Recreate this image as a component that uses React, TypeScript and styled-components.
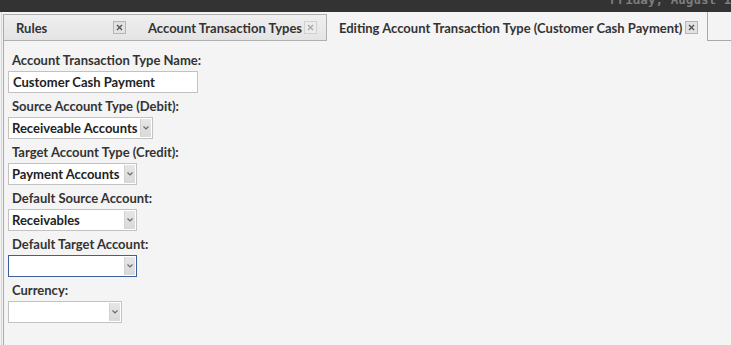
import React from 'react'
import styled, { createGlobalStyle } from 'styled-components'

const GlobalStyle = createGlobalStyle`
  html, body {
    margin: 0;
    padding: 0;
    background: #f4f4f4;
    font-family: Lato, "Liberation Sans", sans-serif;
  }
`

const Page = styled.div`
  width: 731px;
  height: 345px;
  display: flex;
  flex-direction: column;
  overflow: hidden;
  background: #f4f4f4;
`

const TopBar = styled.div`
  height: 12px;
  flex: none;
  background: #333333;
  display: flex;
  padding-left: 610px;
  overflow: hidden;
`

const Clock = styled.div`
  font-family: "DejaVu Sans Mono", monospace;
  font-size: 12.6px;
  font-weight: bold;
  color: #7d7d7d;
  line-height: 12px;
  margin-top: -6px;
  white-space: nowrap;
`

const Body = styled.div`
  flex: 1;
  display: flex;
  border-left: 1px solid #d4d4d4;
  margin-left: 1px;
  padding-left: 1px;
`

const Pane = styled.div`
  flex: 1;
  display: flex;
  flex-direction: column;
  border-left: 1px solid #a9a9a9;
  margin-top: 2px;
`

const TabBar = styled.div`
  height: 29px;
  flex: none;
  display: flex;
  margin-top: -2px;
`

const InactiveTabs = styled.div`
  display: flex;
  align-self: flex-end;
  height: 27px;
  box-sizing: border-box;
  background: linear-gradient(#efefef, #e4e4e4);
  border-top: 1px solid #b0b0b0;
  border-right: 1px solid #b0b0b0;
  border-bottom: 1px solid #b0b0b0;
`

const Tab = styled.div<{ active?: boolean; width: number; padRight: number }>`
  width: ${p => p.width}px;
  box-sizing: border-box;
  display: flex;
  align-items: center;
  justify-content: space-between;
  padding: 0 ${p => p.padRight}px 0 12px;
  font-size: 13px;
  font-weight: bold;
  color: #333333;
  white-space: nowrap;
  ${p =>
    p.active &&
    `
    height: 29px;
    align-self: stretch;
    padding-top: 2px;
    border-right: 1px solid #a9a9a9;
    background: #f4f4f4;
  `}
`

const CloseBox = styled.div<{ dim?: boolean }>`
  width: 13px;
  height: 13px;
  box-sizing: border-box;
  border: 1px solid ${p => (p.dim ? '#d0d0d0' : '#b5b5b5')};
  background: ${p => (p.dim ? '#ececec' : '#e2e2e2')};
  display: flex;
  align-items: center;
  justify-content: center;
  svg {
    display: block;
  }
`

const TabFiller = styled.div`
  flex: 1;
  border-bottom: 1px solid #a9a9a9;
`

const Form = styled.div`
  display: flex;
  flex-direction: column;
  align-items: flex-start;
  padding: 6px 0 0 4px;
`

const Label = styled.div`
  font-size: 13px;
  font-weight: bold;
  color: #333333;
  height: 18px;
  line-height: 18px;
  padding-left: 4px;
  margin: 4px 0 2px;
`

const TextBox = styled.div<{ width: number }>`
  width: ${p => p.width}px;
  height: 22px;
  box-sizing: border-box;
  background: #ffffff;
  border: 1px solid #c2c2c2;
  font-size: 13px;
  font-weight: bold;
  color: #222222;
  line-height: 20px;
  padding-left: 4px;
`

const Select = styled.div<{ width: number; focused?: boolean }>`
  width: ${p => p.width}px;
  height: 22px;
  box-sizing: border-box;
  display: flex;
  background: #ffffff;
  border: 1px solid ${p => (p.focused ? '#3d5f9b' : '#c2c2c2')};
`

const SelectValue = styled.div`
  flex: 1;
  font-size: 13px;
  font-weight: bold;
  color: #222222;
  line-height: 20px;
  padding-left: 3px;
  white-space: nowrap;
  overflow: hidden;
`

const Arrow = styled.div`
  width: 10px;
  margin: 1px 1px 1px 0;
  background: linear-gradient(#e6e6e6, #d9d9d9);
  border-left: 1px solid #d2d2d2;
  display: flex;
  align-items: center;
  justify-content: center;
`

const Cross = ({ color }: { color: string }) => (
  <svg width="7" height="7" viewBox="0 0 7 7">
    <path d="M1 1L6 6M6 1L1 6" stroke={color} strokeWidth="1.4" />
  </svg>
)

const Chevron = () => (
  <svg width="6" height="4" viewBox="0 0 6 4">
    <path d="M0.5 0.5L3 3L5.5 0.5" stroke="#6b6b6b" strokeWidth="1.2" fill="none" />
  </svg>
)

const fields = [
  { label: 'Source Account Type (Debit):', value: 'Receiveable Accounts', width: 145 },
  { label: 'Target Account Type (Credit):', value: 'Payment Accounts', width: 129 },
  { label: 'Default Source Account:', value: 'Receivables', width: 129 },
  { label: 'Default Target Account:', value: '', width: 129, focused: true },
  { label: 'Currency:', value: '', width: 114 },
]

export default function App() {
  return (
    <Page>
      <GlobalStyle />
      <TopBar>
        <Clock>Friday, August 15, 2014</Clock>
      </TopBar>
      <Body>
        <Pane>
          <TabBar>
            <InactiveTabs>
              <Tab width={132} padRight={10}>
                Rules
                <CloseBox>
                  <Cross color="#555" />
                </CloseBox>
              </Tab>
              <Tab width={190} padRight={9}>
                Account Transaction Types
                <CloseBox dim>
                  <Cross color="#a8a8a8" />
                </CloseBox>
              </Tab>
            </InactiveTabs>
            <Tab active width={381} padRight={9}>
              Editing Account Transaction Type (Customer Cash Payment)
              <CloseBox>
                <Cross color="#555" />
              </CloseBox>
            </Tab>
            <TabFiller />
          </TabBar>
          <Form>
            <Label>Account Transaction Type Name:</Label>
            <TextBox width={190}>Customer Cash Payment</TextBox>
            {fields.map(f => (
              <React.Fragment key={f.label}>
                <Label>{f.label}</Label>
                <Select width={f.width} focused={f.focused}>
                  <SelectValue>{f.value}</SelectValue>
                  <Arrow>
                    <Chevron />
                  </Arrow>
                </Select>
              </React.Fragment>
            ))}
          </Form>
        </Pane>
      </Body>
    </Page>
  )
}
